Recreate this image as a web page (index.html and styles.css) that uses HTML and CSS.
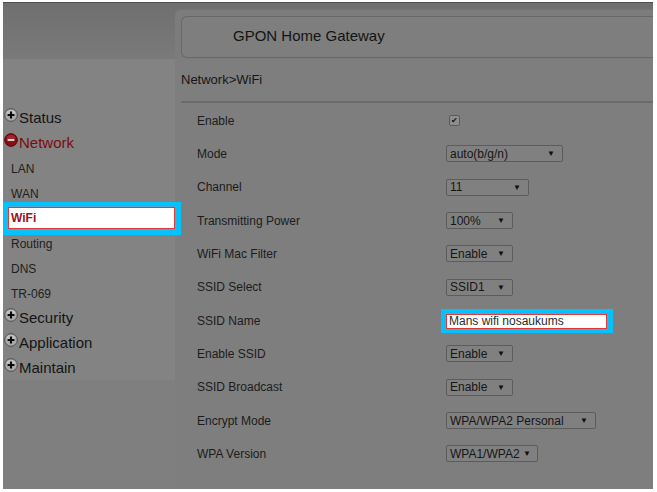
FILE: index.html
```html
<!DOCTYPE html>
<html lang="en">
<head>
  <meta charset="UTF-8">
  <title>GPON Home Gateway</title>
  <link rel="stylesheet" href="styles.css">
</head>
<body>
  <div class="frame">
    <div class="topbar">
      <div class="brand"></div>
      <div class="head-panel">
        <div class="title">GPON Home Gateway</div>
      </div>
    </div>

    <div class="main">
      <nav class="menu">
        <div class="menu-group">
          <svg class="ico" viewBox="0 0 14 14"><circle cx="7" cy="7" r="6.3" fill="#a9a9a9" stroke="#4e4e4e" stroke-width="1"/><ellipse cx="7" cy="4.5" rx="4.3" ry="2.6" fill="#c2c2c2"/><path d="M7 3.6v6.8M3.6 7h6.8" stroke="#0a0a0a" stroke-width="2.1"/></svg>
          Status
        </div>
        <div class="menu-group open">
          <svg class="ico" viewBox="0 0 14 14"><circle cx="7" cy="7" r="6.3" fill="#8a0c10" stroke="#4e0507" stroke-width="1"/><ellipse cx="7" cy="4.5" rx="4.3" ry="2.6" fill="#a3242a"/><path d="M3.6 7h6.8" stroke="#d2d2d2" stroke-width="2.1"/></svg>
          Network
        </div>
        <div class="menu-sub">LAN</div>
        <div class="menu-sub">WAN</div>
        <div class="menu-sub active"><div class="active-box">WiFi</div></div>
        <div class="menu-sub">Routing</div>
        <div class="menu-sub">DNS</div>
        <div class="menu-sub">TR-069</div>
        <div class="menu-group">
          <svg class="ico" viewBox="0 0 14 14"><circle cx="7" cy="7" r="6.3" fill="#a9a9a9" stroke="#4e4e4e" stroke-width="1"/><ellipse cx="7" cy="4.5" rx="4.3" ry="2.6" fill="#c2c2c2"/><path d="M7 3.6v6.8M3.6 7h6.8" stroke="#0a0a0a" stroke-width="2.1"/></svg>
          Security
        </div>
        <div class="menu-group">
          <svg class="ico" viewBox="0 0 14 14"><circle cx="7" cy="7" r="6.3" fill="#a9a9a9" stroke="#4e4e4e" stroke-width="1"/><ellipse cx="7" cy="4.5" rx="4.3" ry="2.6" fill="#c2c2c2"/><path d="M7 3.6v6.8M3.6 7h6.8" stroke="#0a0a0a" stroke-width="2.1"/></svg>
          Application
        </div>
        <div class="menu-group">
          <svg class="ico" viewBox="0 0 14 14"><circle cx="7" cy="7" r="6.3" fill="#a9a9a9" stroke="#4e4e4e" stroke-width="1"/><ellipse cx="7" cy="4.5" rx="4.3" ry="2.6" fill="#c2c2c2"/><path d="M7 3.6v6.8M3.6 7h6.8" stroke="#0a0a0a" stroke-width="2.1"/></svg>
          Maintain
        </div>
      </nav>

      <div class="content">
        <div class="crumb">Network&gt;WiFi</div>

        <div class="form">
          <div class="row">
            <span class="label">Enable</span>
            <span class="check">&#10004;</span>
          </div>
          <div class="row">
            <span class="label">Mode</span>
            <span class="select w-mode">auto(b/g/n)<i>&#9660;</i></span>
          </div>
          <div class="row">
            <span class="label">Channel</span>
            <span class="select w-channel">11<i>&#9660;</i></span>
          </div>
          <div class="row">
            <span class="label">Transmitting Power</span>
            <span class="select w-sm">100%<i>&#9660;</i></span>
          </div>
          <div class="row">
            <span class="label">WiFi Mac Filter</span>
            <span class="select w-sm">Enable<i>&#9660;</i></span>
          </div>
          <div class="row">
            <span class="label">SSID Select</span>
            <span class="select w-sm">SSID1<i>&#9660;</i></span>
          </div>
          <div class="row">
            <span class="label">SSID Name</span>
            <span class="hl"><span class="ssid-input">Mans wifi nosaukums</span></span>
          </div>
          <div class="row">
            <span class="label">Enable SSID</span>
            <span class="select w-sm">Enable<i>&#9660;</i></span>
          </div>
          <div class="row">
            <span class="label">SSID Broadcast</span>
            <span class="select w-sm">Enable<i>&#9660;</i></span>
          </div>
          <div class="row">
            <span class="label">Encrypt Mode</span>
            <span class="select w-encrypt">WPA/WPA2 Personal<i>&#9660;</i></span>
          </div>
          <div class="row">
            <span class="label">WPA Version</span>
            <span class="select w-wpa">WPA1/WPA2<i>&#9660;</i></span>
          </div>
        </div>
      </div>
    </div>
  </div>
</body>
</html>
```

FILE: styles.css
```css
body {
  margin: 0;
  background: #fff;
  font-family: "Liberation Sans", Arial, sans-serif;
  color: #1c1c1c;
}
.frame {
  margin: 2px 4px 0 3px;
  height: 487px;
  box-sizing: border-box;
  border-top: 1px solid #4e4e4e;
  background: #7f7f7f;
  display: flex;
  flex-direction: column;
}
.topbar {
  height: 56px;
  display: flex;
  background: linear-gradient(#6f6f6f, #7a7a7a);
}
.brand {
  width: 172px;
}
.head-panel {
  flex: 1;
  margin-top: 6px;
  padding: 6px 0 2px 6px;
  background: #7c7c7c;
  border-radius: 6px 0 0 0;
  border-top: 1px solid #747474;
}
.title {
  height: 42px;
  box-sizing: border-box;
  border: 1px solid #686868;
  border-right: none;
  border-radius: 6px 0 0 6px;
  background: #7e7e7e;
  padding-left: 51px;
  line-height: 38px;
  font-size: 15px;
  color: #141414;
}
.main {
  flex: 1;
  display: flex;
}
.menu {
  width: 172px;
  align-self: flex-start;
  background: #838383;
  padding-top: 46px;
}
.menu-group {
  height: 25px;
  display: flex;
  align-items: center;
  padding-left: 1px;
  font-size: 15px;
  color: #141414;
}
.menu-group.open {
  color: #7c0c10;
}
.ico {
  width: 14px;
  height: 14px;
  margin: 0 1px 5px 0;
  flex-shrink: 0;
}
.menu-sub {
  height: 25px;
  box-sizing: border-box;
  padding: 3px 0 0 8px;
  line-height: 22px;
  font-size: 12px;
  color: #1e1e1e;
}
.menu-sub.active {
  position: relative;
  height: 33px;
  margin: -3px -6px -5px 0;
  padding: 5px 6px 6px 5px;
  background: #00c3ff;
}
.active-box {
  height: 22px;
  box-sizing: border-box;
  border: 1px solid #e23838;
  box-shadow: 0 0 2px #ff6a6a;
  background: #fff;
  padding-left: 2px;
  line-height: 20px;
  font-weight: bold;
  color: #9e1020;
}
.content {
  flex: 1;
  background: #7e7e7e;
}
.crumb {
  margin-left: 6px;
  padding: 11px 0 11px;
  line-height: 20px;
  font-size: 13px;
  color: #161616;
  border-bottom: 2px solid #6b6b6b;
}
.form {
  padding: 1px 0 0 22px;
}
.row {
  height: 33.33px;
  display: flex;
  align-items: center;
  font-size: 12px;
}
.label {
  width: 249px;
  color: #1c1c1c;
}
.check {
  width: 11px;
  height: 11px;
  margin-left: 3px;
  box-sizing: border-box;
  border: 1px solid #5a5a5a;
  border-radius: 2px;
  background: #8e8e8e;
  font-size: 8px;
  line-height: 9px;
  text-align: center;
  color: #111;
}
.select {
  height: 17px;
  box-sizing: border-box;
  display: inline-flex;
  align-items: center;
  justify-content: space-between;
  padding: 0 7px 0 3px;
  border: 1px solid #5c5c5c;
  border-radius: 2px;
  background: #808080;
  color: #161616;
}
.select i {
  font-style: normal;
  font-size: 8px;
  color: #0e0e0e;
}
.w-sm { width: 67px; }
.w-channel { width: 83px; }
.w-wpa { width: 92px; padding-right: 6px; }
.w-mode { width: 117px; }
.w-encrypt { width: 150px; }
.hl {
  margin-left: -5px;
  padding: 5px 6px 4px 5px;
  background: #00c3ff;
  display: inline-flex;
}
.ssid-input {
  width: 161px;
  height: 15px;
  box-sizing: border-box;
  border: 1px solid #e23838;
  box-shadow: 0 0 2px #ff6a6a;
  background: #fff;
  padding-left: 2px;
  line-height: 13px;
  color: #2a2a2a;
}
```
